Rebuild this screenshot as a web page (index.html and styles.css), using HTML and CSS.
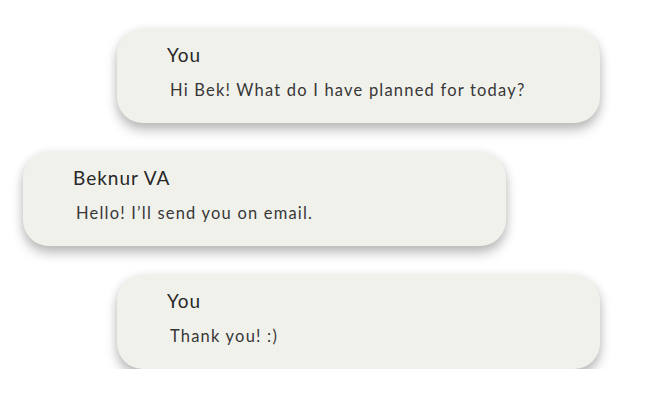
FILE: index.html
```html
<!DOCTYPE html>
<html lang="en">

<head>
    <meta charset="UTF-8">
    <meta name="viewport" content="width=device-width, initial-scale=1.0">
    <title>Chat</title>
    <link rel="stylesheet" href="styles.css">
</head>

<body>
    <div class="chat">
        <div class="bubble mine">
            <div class="name">You</div>
            <div class="text">Hi Bek! What do I have planned for today?</div>
        </div>
        <div class="bubble theirs">
            <div class="name">Beknur VA</div>
            <div class="text">Hello! I’ll send you on email.</div>
        </div>
        <div class="bubble mine">
            <div class="name">You</div>
            <div class="text">Thank you! :)</div>
        </div>
    </div>
</body>

</html>
```

FILE: styles.css
```css
body {
    margin: 0;
    background: rgb(255, 255, 255);
    font-family: Lato, "Open Sans", sans-serif;
}

.chat {
    display: flex;
    flex-direction: column;
    gap: 29px;
    padding-top: 29px;
}

.bubble {
    width: 483px;
    height: 94px;
    box-sizing: border-box;
    padding: 14px 0 0 50px;
    background: rgb(241, 241, 236);
    border-radius: 26px;
    box-shadow: 0 7px 12px rgba(0, 0, 0, 0.26), 0 0 10px rgba(0, 0, 0, 0.07);
}

.mine {
    margin-left: 117px;
}

.theirs {
    margin-left: 23px;
}

.name {
    font-size: 19px;
    line-height: 24px;
    letter-spacing: 1px;
    color: rgb(40, 40, 40);
}

.text {
    margin-top: 13px;
    padding-left: 3px;
    font-size: 16.5px;
    line-height: 20px;
    letter-spacing: 1.2px;
    color: rgb(55, 55, 55);
}
```
